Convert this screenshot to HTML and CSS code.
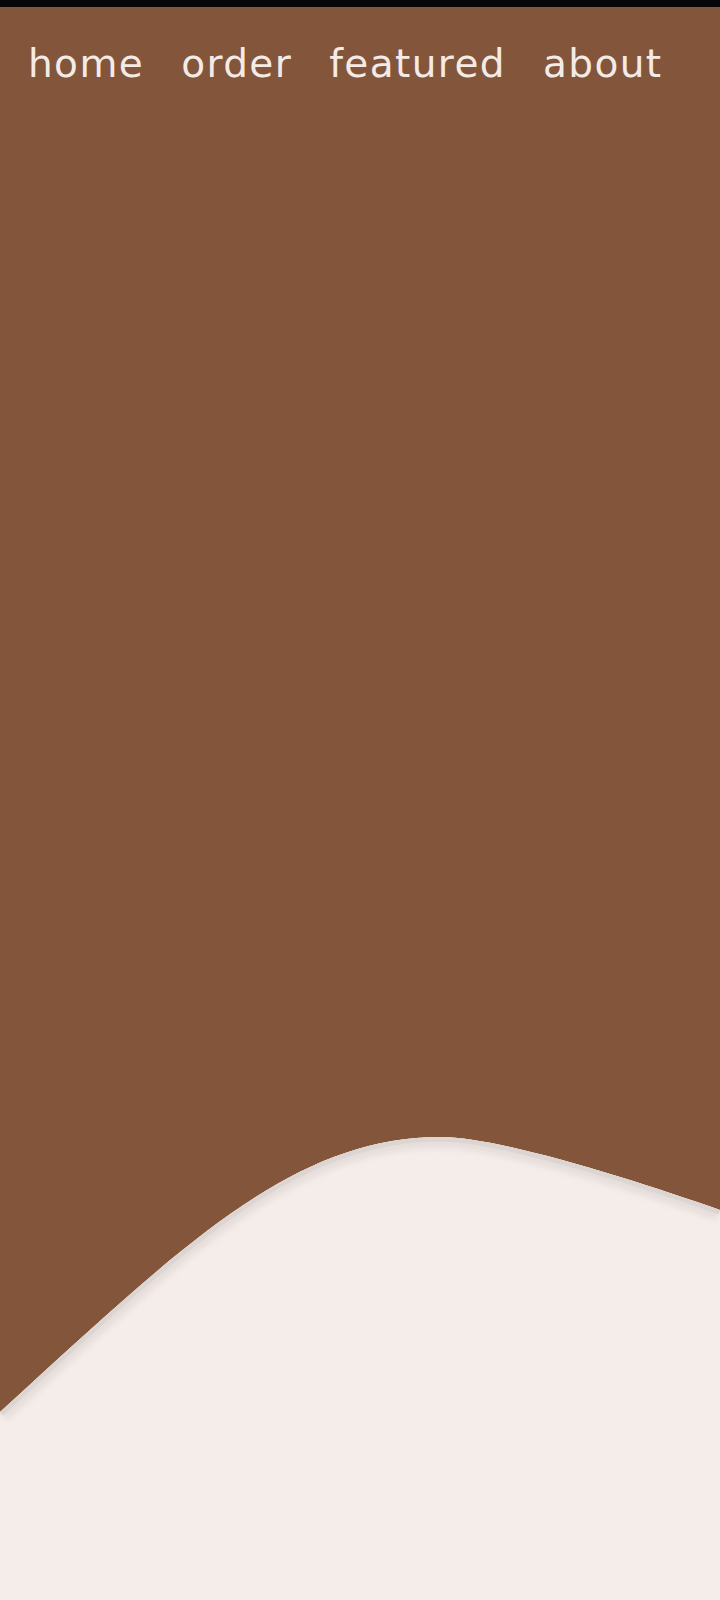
FILE: index.html
```html
<!DOCTYPE html>
<html lang="en">
<head>
<meta charset="utf-8">
<title>Coffee</title>
<link rel="stylesheet" href="styles.css">
</head>
<body>
<div class="page">
  <div class="status-bar"></div>
  <nav class="nav">
    <a class="nav-link" href="#">home</a>
    <a class="nav-link" href="#">order</a>
    <a class="nav-link" href="#">featured</a>
    <a class="nav-link" href="#">about</a>
  </nav>
  <main class="hero"></main>
  <svg class="wave" viewBox="0 0 720 470" preserveAspectRatio="none" aria-hidden="true">
    <defs>
      <clipPath id="waveClip">
        <path d="M0 282 C180 118 291 7 441 7 C500 7 640 52 720 80 L720 470 L0 470 Z"/>
      </clipPath>
      <filter id="soft" x="-5%" y="-20%" width="110%" height="140%">
        <feGaussianBlur stdDeviation="3"/>
      </filter>
    </defs>
    <path class="wave-fill" d="M0 282 C180 118 291 7 441 7 C500 7 640 52 720 80 L720 470 L0 470 Z"/>
    <g clip-path="url(#waveClip)">
      <path class="wave-glow" filter="url(#soft)" d="M0 282 C180 118 291 7 441 7 C500 7 640 52 720 80"/>
      <path class="wave-edge" d="M0 282 C180 118 291 7 441 7 C500 7 640 52 720 80"/>
    </g>
  </svg>
</div>
</body>
</html>
```

FILE: styles.css
```css
html, body {
  margin: 0;
  padding: 0;
}

body {
  background: #83563b;
  font-family: "DejaVu Sans", "Lato", sans-serif;
}

.page {
  min-height: 1600px;
  display: flex;
  flex-direction: column;
}

.status-bar {
  height: 7px;
  background: #06070a;
}

.nav {
  display: flex;
  gap: 37px;
  padding: 33px 0 0 28px;
}

.nav-link {
  color: #f4ebe7;
  text-decoration: none;
  font-size: 39px;
  line-height: 48px;
  font-weight: 400;
  letter-spacing: 1.4px;
}

.hero {
  flex: 1;
}

.wave {
  display: block;
  width: 720px;
  height: 470px;
}

.wave-fill {
  fill: #f5ede9;
}

.wave-glow {
  fill: none;
  stroke: #e6dedb;
  stroke-width: 22;
}

.wave-edge {
  fill: none;
  stroke: #ddd5d1;
  stroke-width: 9;
}
```
